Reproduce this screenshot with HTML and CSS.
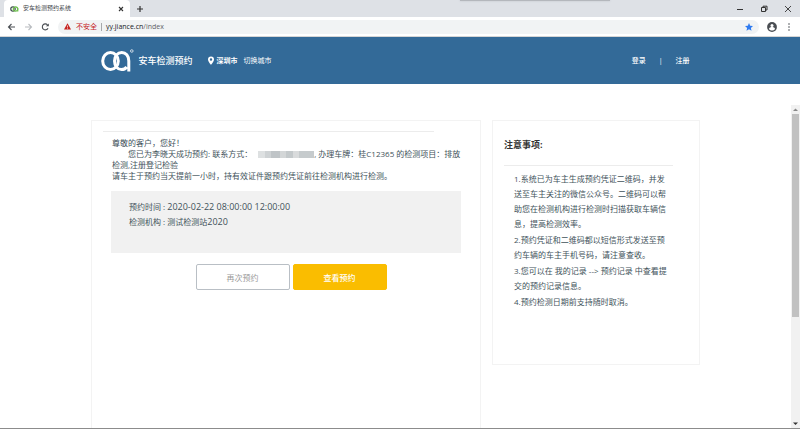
FILE: index.html
```
<!DOCTYPE html>
<html lang="zh-CN">
<head>
    <meta charset="UTF-8">
    <meta name="viewport" content="width=device-width, initial-scale=1.0">
    <title>安车检测预约系统</title>
    <link rel="stylesheet" href="styles.css">
</head>
<body>
    <div class="tabs">
        <div class="tab">
            <svg class="favicon" viewBox="0 0 18 12" fill="none" stroke-width="2.4">
                <circle cx="6" cy="6" r="4.4" stroke="#3c4a4a"/>
                <path d="M11 1.6a4.4 4.4 0 1 0 0 8.8a4.4 4.4 0 1 0 0-8.8" stroke="#6cc04a"/>
                <path d="M15.5 4v7" stroke="#6cc04a"/>
            </svg>
            <span class="tab-title">安车检测预约系统</span>
            <button class="icon-btn" aria-label="关闭标签页">
                <svg width="6" height="6" viewBox="0 0 6 6" stroke="#333" stroke-width="1.1"><path d="M1 1l4 4M5 1l-4 4"/></svg>
            </button>
        </div>
        <button class="icon-btn new-tab" aria-label="新标签页">
            <svg width="8" height="8" viewBox="0 0 8 8" stroke="#333" stroke-width="1.2"><path d="M4 1v6M1 4h6"/></svg>
        </button>
        <div class="window-shade"></div>
        <div class="window-buttons">
            <button class="icon-btn" aria-label="最小化">
                <svg width="8" height="8" viewBox="0 0 8 8" stroke="#333"><path d="M1 4.5h6"/></svg>
            </button>
            <button class="icon-btn" aria-label="还原">
                <svg width="8" height="8" viewBox="0 0 8 8" fill="none" stroke="#333"><path d="M1.5 2.5h4v4h-4zM3 2.500V1.200h4V5h-1.500"/></svg>
            </button>
            <button class="icon-btn" aria-label="关闭">
                <svg width="8" height="8" viewBox="0 0 8 8" stroke="#333" stroke-width=".9"><path d="M1 1l6 6M7 1l-6 6"/></svg>
            </button>
        </div>
    </div>

    <div class="toolbar">
        <button class="icon-btn" aria-label="后退">
            <svg width="9" height="8" viewBox="0 0 9 8" fill="none" stroke="#4b4f54" stroke-width="1.1"><path d="M8 4H1.500M4.500 1l-3 3 3 3"/></svg>
        </button>
        <button class="icon-btn" aria-label="前进">
            <svg width="9" height="8" viewBox="0 0 9 8" fill="none" stroke="#b9bcc0" stroke-width="1.1"><path d="M1 4h6.500M4.500 1l3 3-3 3"/></svg>
        </button>
        <button class="icon-btn" aria-label="刷新">
            <svg width="9" height="8" viewBox="0 0 9 8" fill="none" stroke="#4b4f54" stroke-width="1.1"><path d="M7 5.300A3 3 0 1 1 6.500 1.800"/><path d="M7.800.4v2.900H4.900z" fill="#4b4f54" stroke="none"/></svg>
        </button>
        <div class="address">
            <svg width="7" height="7" viewBox="0 0 7 7"><path d="M3.500.3L7 6.500H0z" fill="#c5221f"/><path d="M3.500 2.500v2M3.500 5v.7" stroke="#fff" stroke-width=".7"/></svg>
            <span class="unsafe">不安全</span>
            <span class="bar"></span>
            <span class="url"><b>yy.jiance.cn</b>/index</span>
            <svg class="star" width="8" height="8" viewBox="0 0 8 8"><path d="M4 0l1.200 2.700 2.800.3-2.100 1.900.6 2.900L4 6.300 1.500 7.800l.6-2.900L0 3l2.800-.3z" fill="#2f7bf0"/></svg>
        </div>
        <button class="icon-btn" aria-label="用户">
            <svg width="10" height="10" viewBox="0 0 10 10"><circle cx="5" cy="5" r="4.900" fill="#4a4e53"/><circle cx="5" cy="3.400" r="1.500" fill="#fff"/><path d="M2 7c0-1.400 2-1.900 3-1.900s3 .5 3 1.900c-.8 1.100-1.900 1.500-3 1.500S2.800 8.100 2 7z" fill="#fff"/></svg>
        </button>
        <button class="icon-btn" aria-label="菜单">
            <svg width="8" height="8" viewBox="0 0 8 8" fill="#4a4e53"><circle cx="4" cy="1" r=".8"/><circle cx="4" cy="4" r=".8"/><circle cx="4" cy="7" r=".8"/></svg>
        </button>
    </div>

    <header class="header">
        <div class="header-inner">
            <svg class="logo" width="33" height="24" viewBox="0 0 33 24" fill="none" stroke="#fff" stroke-width="3">
                <ellipse cx="9.500" cy="12" rx="7.800" ry="8.600"/>
                <path d="M27.800 22.500V12c0-5-3-8.600-7-8.600-4.300 0-7.300 3.800-7.300 8.600s3 8.600 7 8.600c2.200 0 4-1 5.200-2.600"/>
                <circle cx="30.800" cy="2" r="1.300" stroke-width=".7"/>
            </svg>
            <span class="brand">安车检测预约</span>
            <svg class="pin" width="6" height="9" viewBox="0 0 6 9"><path fill="#fff" fill-rule="evenodd" d="M3 .5a3 3 0 0 0-3 3C0 5.600 3 8.800 3 8.800s3-3.200 3-5.300a3 3 0 0 0-3-3zm0 1.800a1.200 1.200 0 1 1 0 2.400 1.200 1.200 0 0 1 0-2.400z"/></svg>
            <b class="city">深圳市</b>
            <a href="#">切换城市</a>
            <nav class="account">
                <a href="#">登录</a>
                <span>|</span>
                <a href="#">注册</a>
            </nav>
        </div>
    </header>

    <div class="viewport">
        <main class="content">
            <section class="card result">
                <hr>
                <div class="message">
                    <p>尊敬的客户，您好！</p>
                    <p class="detail">您已为李晓天成功预约: 联系方式：<span class="masked"></span>, 办理车牌：桂C12365 的检测项目：排放<br>检测,注册登记检验</p>
                    <p>请车主于预约当天提前一小时，持有效证件跟预约凭证前往检测机构进行检测。</p>
                </div>
                <div class="booking">
                    <p>预约时间 : <span>2020-02-22 08:00:00 12:00:00</span></p>
                    <p>检测机构 : 测试检测站<span>2020</span></p>
                </div>
                <div class="actions">
                    <button class="btn">再次预约</button>
                    <button class="btn btn-primary">查看预约</button>
                </div>
            </section>
            <aside class="card notice">
                <h2>注意事项:</h2>
                <hr>
                <ul>
                    <li>1.系统已为车主生成预约凭证二维码，并发<br>送至车主关注的微信公众号。二维码可以帮<br>助您在检测机构进行检测时扫描获取车辆信<br>息，提高检测效率。</li>
                    <li>2.预约凭证和二维码都以短信形式发送至预<br>约车辆的车主手机号码，请注意查收。</li>
                    <li>3.您可以在 我的记录 --&gt; 预约记录 中查看提<br>交的预约记录信息。</li>
                    <li>4.预约检测日期前支持随时取消。</li>
                </ul>
            </aside>
        </main>
        <div class="scrollbar">
            <svg width="9" height="9" viewBox="0 0 9 9"><path d="M4.500 3.500L7 6H2z" fill="#888"/></svg>
            <div class="thumb"></div>
            <svg width="9" height="9" viewBox="0 0 9 9"><path d="M4.500 6L7 3.500H2z" fill="#333"/></svg>
        </div>
    </div>
</body>
</html>
```
FILE: styles.css
```
* {
    box-sizing: border-box;
}
body {
    margin: 0;
    height: 100vh;
    display: flex;
    flex-direction: column;
    overflow: hidden;
    border-bottom: 1px solid #8c8c8c;
    background-color: #fff;
    color: #41525a;
    font-family: "Open Sans", "Noto Sans CJK SC", sans-serif;
    font-size: 8px;
    line-height: 11px;
}
p, ul, h2, hr {
    margin: 0;
    padding: 0;
}
a {
    color: inherit;
    text-decoration: none;
}
svg {
    display: block;
    flex: none;
}
hr {
    border: 0;
    border-top: 1px solid #ececec;
}
.icon-btn {
    padding: 0;
    border: 0;
    background: none;
}

/* browser frame */
.tabs {
    display: flex;
    align-items: center;
    flex: none;
    height: 17px;
    padding-left: 4px;
    background-color: #dee1e6;
    position: relative;
}
.tab {
    display: flex;
    align-items: center;
    width: 126px;
    height: 17px;
    padding: 0 6px;
    background-color: #fff;
    border-radius: 4px 4px 0 0;
    color: #45494d;
    font-size: 6px;
}
.favicon {
    width: 9px;
    height: 6px;
    margin-right: 4px;
}
.tab-title {
    flex: 1;
}
.new-tab {
    margin-left: 6px;
}
.window-shade {
    position: absolute;
    top: 0;
    left: 460px;
    width: 150px;
    height: 1px;
    background-color: #b4b7bc;
    box-shadow: 0 0 2px #b4b7bc;
}
.window-buttons {
    display: flex;
    gap: 16px;
    margin-left: auto;
    padding-right: 8px;
}
.toolbar {
    display: flex;
    align-items: center;
    flex: none;
    gap: 8px;
    height: 20px;
    padding: 0 7px;
    border-bottom: 1px solid #d5d5d5;
}
.address {
    display: flex;
    align-items: center;
    flex: 1;
    height: 14px;
    padding: 0 6px;
    border-radius: 7px;
    background-color: #f1f3f4;
    color: #5f6368;
    font-size: 7px;
}
.unsafe {
    margin: 0 4px 0 5px;
    color: #c5221f;
}
.bar {
    width: 1px;
    height: 8px;
    margin-right: 4px;
    background-color: #a5a8ab;
}
.url b {
    color: #202124;
    font-weight: normal;
}
.star {
    margin-left: auto;
}

/* site header */
.header {
    flex: none;
    height: 47px;
    padding-right: 10px;
    background-color: #336a98;
    color: #fff;
    font-size: 7px;
}
.header-inner {
    display: flex;
    align-items: center;
    max-width: 589px;
    height: 47px;
    margin: 0 auto;
}
.brand {
    margin: 0 15px 0 5px;
    font-size: 9px;
    font-weight: 500;
}
.pin {
    margin-right: 3px;
}
.city {
    margin-right: 6px;
}
.account {
    display: flex;
    gap: 13px;
    margin-left: auto;
    font-weight: 500;
}

/* page */
.viewport {
    display: flex;
    flex: 1;
    min-height: 0;
}
.content {
    display: grid;
    grid-template-columns: 390fr 208fr;
    gap: 11px;
    width: 100%;
    max-width: 609px;
    margin: 36px auto 0;
}
.card {
    border: 1px solid #f3f3f3;
}
.result {
    border-bottom: 0;
    padding: 10px 11px;
}
.result hr {
    margin-right: 35px;
}
.message {
    padding: 5px 0 0 9px;
}
.detail {
    text-indent: 16px;
    white-space: nowrap;
}
.masked {
    display: inline-block;
    width: 56px;
    height: 7px;
    margin-left: 6px;
    vertical-align: middle;
    background: linear-gradient(90deg, #dde0e1 0 12%, #ced2d4 12% 24%, #bfc4c7 24% 40%, #d3d6d7 40% 50%, #c4c9cb 50% 62%, #d9dbdc 62% 74%, #c6cbcd 74%);
}
.booking {
    height: 62px;
    margin: 10px 8px 0;
    padding: 8px 18px;
    background-color: #f1f1f1;
    line-height: 15px;
}
.booking span {
    font-size: 9px;
}
.actions {
    display: flex;
    justify-content: center;
    gap: 3px;
    margin-top: 11px;
    padding-left: 10px;
}
.btn {
    width: 94px;
    height: 26px;
    padding: 0;
    border: 1px solid #b9bfc5;
    border-radius: 2px;
    background-color: #fff;
    color: #999;
    font-family: inherit;
    font-size: 8px;
}
.btn-primary {
    border-color: #fabd00;
    background-color: #fabd00;
    color: #fff;
    font-weight: 500;
}
.notice {
    align-self: start;
    height: 245px;
    padding: 16px 11px;
}
.notice h2 {
    margin-bottom: 13px;
    color: #333;
    font-size: 9px;
    font-weight: bold;
    line-height: 15px;
}
.notice hr {
    margin-right: 15px;
}
.notice ul {
    padding: 5px 0 0 10px;
    list-style: none;
    line-height: 15px;
    white-space: nowrap;
}
.notice li {
    margin-bottom: 1px;
}
.scrollbar {
    display: flex;
    flex-direction: column;
    flex: none;
    width: 9px;
    margin-top: 21px;
    background-color: #f1f1f1;
}
.thumb {
    height: 63%;
    margin: 0 1px auto;
    background-color: #c1c1c1;
}
```
